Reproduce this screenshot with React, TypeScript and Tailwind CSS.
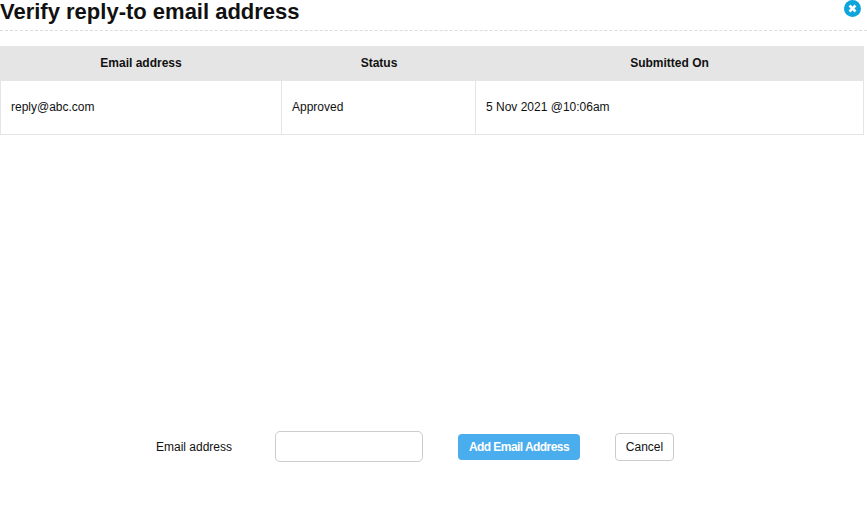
const FONT = "font-['Liberation_Sans',Arial,sans-serif]";

function CloseIcon() {
  return (
    <svg width="17" height="17" viewBox="0 0 17 17" className="absolute left-[844px] top-0">
      <circle cx="8.5" cy="8.5" r="8.5" fill="#0ea5dc" />
      <path d="M5.5 5.5l6 6M11.5 5.5l-6 6" stroke="#fff" strokeWidth="2.6" />
    </svg>
  );
}

export default function App() {
  return (
    <div className={`relative w-[867px] h-[512px] bg-white overflow-hidden text-[#111] ${FONT}`}>
      <CloseIcon />

      <h1 className="h-[31px] text-[22px] leading-[23px] font-bold border-b border-dashed border-[#dcdcdc]">
        Verify reply-to email address
      </h1>

      <table className="mt-[15px] w-[864px] table-fixed border-collapse text-xs">
        <thead>
          <tr className="h-[34px] bg-[#e5e5e5]">
            <th className="w-[281px] pb-[2px] font-bold border border-[#e5e5e5]">Email address</th>
            <th className="w-[194px] pb-[2px] pl-[1px] font-bold border border-[#e5e5e5]">Status</th>
            <th className="pb-[2px] font-bold border border-[#e5e5e5]">Submitted On</th>
          </tr>
        </thead>
        <tbody>
          <tr className="h-[54px]">
            <td className="border border-[#e5e5e5] pl-[10px] pb-[2px]">reply@abc.com</td>
            <td className="border border-[#e5e5e5] pl-[10px] pb-[2px]">Approved</td>
            <td className="border border-[#e5e5e5] pl-[10px] pb-[2px]">5 Nov 2021 @10:06am</td>
          </tr>
        </tbody>
      </table>

      <div className="mt-[296px] h-[32px] flex items-center text-xs pl-[156px]">
        <label className="w-[119px]">Email address</label>
        <input type="text" className="self-start w-[148px] h-[31px] rounded-[5px] border border-[#cccccc] bg-white" />
        <button className="ml-[35px] w-[122px] h-[26px] rounded-[4px] bg-[#4aaded] text-white font-bold tracking-[-0.55px]">
          Add Email Address
        </button>
        <button className="ml-[35px] w-[59px] h-[28px] rounded-[4px] border border-[#cccccc] bg-white">
          Cancel
        </button>
      </div>
    </div>
  );
}
